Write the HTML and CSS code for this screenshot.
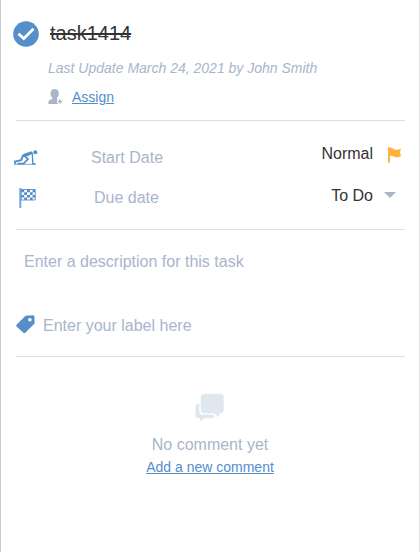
FILE: index.html
```html
<!DOCTYPE html>
<html lang="en">
<head>
<meta charset="utf-8">
<title>Task details</title>
<link rel="stylesheet" href="styles.css">
</head>
<body>
<main class="panel">
  <header class="head">
    <div class="title-row">
      <svg class="check" viewBox="0 0 26 26"><circle cx="13" cy="13" r="12.8" fill="#568dcb"/><path d="M5.500 12.800l5.300 4.800 9.700-9.800" fill="none" stroke="#fff" stroke-width="2.800"/></svg>
      <h1 class="title">task1414</h1>
    </div>
    <p class="updated">Last Update March 24, 2021 by John Smith</p>
    <div class="assign-row">
      <svg class="person" viewBox="0 0 16 16"><path d="M6.700 0c2.700 0 4.200 1.900 4.200 4.400 0 1.900-.7 3.300-1.900 4.300v1.600l1 .5V15H.4v-1.800c0-2 1.600-2.500 4-3.300V8.700C3.200 7.700 2.500 6.300 2.500 4.400 2.500 1.900 4 0 6.700 0z" fill="#a9b5cb"/><path d="M12 9.500v6M9 12.500h6" stroke="#fff" stroke-width="3"/><path d="M12 10.300v4.400M9.800 12.500h4.400" stroke="#a9b5cb" stroke-width="1.300"/></svg>
      <a class="link">Assign</a>
    </div>
  </header>
  <section class="details">
    <div class="row">
      <svg class="runner" viewBox="0 0 24 16"><circle cx="21.300" cy="2.200" r="2" fill="#568dcb"/><path d="M8 5.200L10 3.800 17.500 1.300 19.200 3.500 13.500 6.200 9.200 6.900z" fill="#568dcb"/><path d="M9.200 5.200L7.200 10.200 1 11.500V13.800" fill="none" stroke="#568dcb" stroke-width="2"/><path d="M10 5.700l4 3.300-4.500 4.700H3.500" fill="none" stroke="#568dcb" stroke-width="1.700"/><path d="M18.300 3.200l.5 10.700h2.700" fill="none" stroke="#568dcb" stroke-width="1.400"/><path d="M0 14.300h22" stroke="#568dcb" stroke-width=".8"/></svg>
      <span class="label start">Start Date</span>
      <span class="value normal">Normal</span>
      <svg class="flag" viewBox="0 0 16 16"><path d="M1 0h1.500v1.100C5-.2 6.800 2.700 9 2.700c1.700 0 3.400-.6 4.900-1.300l-.8 3.900.9 3.900c-2.600 1.400-5 1.600-7.200.2-1.300-.8-2.600-.8-3.800-.3V15.500H1z" fill="#ffb13b"/></svg>
    </div>
    <div class="row second">
      <svg class="checkered" viewBox="0 0 18 20"><path d="M1.300 0v20" stroke="#78a6d8" stroke-width="2"/><path d="M2.200 1.500h14v10.500h-14z" fill="#fff" stroke="#568dcb" stroke-width=".9"/><path d="M2.200 1.500h3v2.700h-3zM8 1.500h3v2.700H8zM13.600 1.500h2.600v2.700h-2.600zM5.200 4.200H8v2.700H5.200zM11 4.200h2.600v2.700H11zM2.200 6.900h3v2.700h-3zM8 6.900h3v2.700H8zM13.600 6.900h2.600v2.700h-2.600zM5.200 9.600H8V12H5.200zM11 9.600h2.600V12H11z" fill="#568dcb"/></svg>
      <span class="label due">Due date</span>
      <span class="value todo">To Do</span>
      <svg class="caret" viewBox="0 0 12 6"><path d="M0 0h12L6 6z" fill="#a9b5cb"/></svg>
    </div>
  </section>
  <section class="notes">
    <p class="description">Enter a description for this task</p>
    <div class="label-row">
      <svg class="tag" viewBox="0 0 19 19"><path d="M9.500.7L17 .3q1.500 0 1.500 1.500v6.700L9.500 17.500q-1.200 1.200-2.400 0L.8 11.700q-1.200-1.200 0-2.200z" fill="#568dcb"/><circle cx="13.900" cy="4.800" r="1.800" fill="#fff"/></svg>
      <span class="label-input">Enter your label here</span>
    </div>
  </section>
  <section class="comments">
    <svg class="bubbles" viewBox="0 0 30 30"><path d="M9 .8h16.500q3.200 0 3.200 3.200v13.200q0 3-3 3h-1.500v4.500l-5-4.500H9q-3.200 0-3.200-3.200V4Q5.800.8 9 .8z" fill="#e0e8ef"/><path d="M4.300 10.800v7.400q0 3.400 3.500 3.400h9.700l2.300 2.100q-1 1.600-3 1.600H9.500L5.200 29v-3.700H3.500q-3 0-3-3V14q0-2.900 3.800-3.200z" fill="#e0e8ef"/></svg>
    <p class="empty">No comment yet</p>
    <a class="link add">Add a new comment</a>
  </section>
</main>
</body>
</html>
```
FILE: styles.css
```css
* { box-sizing: border-box; }
body { margin: 0; background: #fff; font-family: "Liberation Sans", Arial, sans-serif; color: #333; }
h1, p { margin: 0; font-weight: normal; }
svg { display: block; flex: none; }
.panel { height: 552px; padding: 0 14px 0 15px; border-left: 1px solid #ccc; border-right: 1px solid #e1e1e1; overflow: hidden; }
.head, .details, .notes { border-bottom: 1px solid #dedede; }
.head { height: 121px; padding-top: 21px; }
.title-row { display: flex; align-items: flex-start; height: 26px; margin-left: -3px; }
.check { width: 26px; height: 26px; }
.title { margin: -1px 0 0 11px; font-size: 20px; line-height: 26px; text-decoration: line-through; text-decoration-thickness: 2px; }
.updated { margin: 12px 0 0 32px; font-size: 14px; line-height: 18px; font-style: italic; color: #a9b5cb; }
.assign-row { display: flex; align-items: center; height: 20px; margin: 10px 0 0 32px; }
.person { width: 16px; height: 16px; }
.link { color: #568dcb; font-size: 14px; line-height: 20px; text-decoration: underline; }
.assign-row .link { margin-left: 8px; }
.details { height: 109px; padding-top: 23px; }
.row { display: flex; align-items: flex-start; height: 42px; font-size: 16px; line-height: 20px; }
.label { color: #a9b5cb; }
.value { margin-left: auto; }
.runner { width: 24px; height: 16px; margin: 6px 0 0 -2px; }
.start { margin: 4px 0 0 53px; }
.normal { margin-right: 14px; }
.flag { width: 16px; height: 16px; margin: 3px 2px 0 0; }
.checkered { width: 18px; height: 20px; margin: 2px 0 0 3px; }
.due { margin: 2px 0 0 57px; }
.todo { margin-right: 11px; }
.caret { width: 12px; height: 6px; margin: 6px 9px 0 0; }
.notes { height: 127px; padding-top: 22px; font-size: 16px; line-height: 20px; color: #a9b5cb; }
.description { margin-left: 8px; }
.label-row { display: flex; align-items: center; height: 20px; margin-top: 44px; }
.tag { width: 19px; height: 19px; margin-top: -4px; }
.label-input { margin-left: 8px; }
.comments { display: flex; flex-direction: column; align-items: center; padding: 36px 1px 0 0; }
.bubbles { width: 30px; height: 30px; }
.empty { margin-top: 12px; font-size: 16px; line-height: 20px; color: #a9b5cb; }
.add { margin-top: 2px; }
```
